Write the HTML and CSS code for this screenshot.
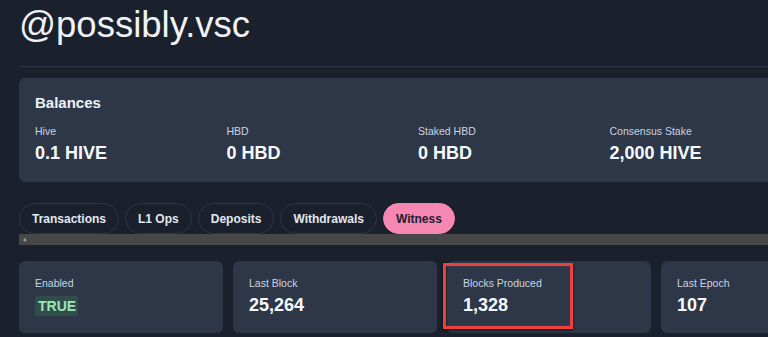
FILE: index.html
```html
<!DOCTYPE html>
<html lang="en">
<head>
    <meta charset="UTF-8">
    <meta name="viewport" content="width=device-width, initial-scale=1.0">
    <title>@possibly.vsc</title>
    <link rel="stylesheet" href="styles.css">
</head>
<body>
    <div class="page">
        <h1 class="account-name">@possibly.vsc</h1>
        <hr class="divider">

        <section class="card balances">
            <h2>Balances</h2>
            <div class="balance-grid">
                <div class="stat">
                    <div class="stat-label">Hive</div>
                    <div class="stat-value">0.1 HIVE</div>
                </div>
                <div class="stat">
                    <div class="stat-label">HBD</div>
                    <div class="stat-value">0 HBD</div>
                </div>
                <div class="stat">
                    <div class="stat-label">Staked HBD</div>
                    <div class="stat-value">0 HBD</div>
                </div>
                <div class="stat">
                    <div class="stat-label">Consensus Stake</div>
                    <div class="stat-value">2,000 HIVE</div>
                </div>
            </div>
        </section>

        <div class="tabs-wrap">
            <div class="tabs">
                <button class="tab">Transactions</button>
                <button class="tab">L1 Ops</button>
                <button class="tab">Deposits</button>
                <button class="tab">Withdrawals</button>
                <button class="tab active">Witness</button>
            </div>
            <div class="fake-scrollbar"><span class="arrow-left"></span></div>
        </div>

        <div class="witness-grid">
            <div class="card stat-card">
                <div class="stat-label">Enabled</div>
                <div class="stat-value"><span class="badge-true">TRUE</span></div>
            </div>
            <div class="card stat-card">
                <div class="stat-label">Last Block</div>
                <div class="stat-value">25,264</div>
            </div>
            <div class="card stat-card">
                <div class="stat-label">Blocks Produced</div>
                <div class="stat-value">1,328</div>
            </div>
            <div class="card stat-card">
                <div class="stat-label">Last Epoch</div>
                <div class="stat-value">107</div>
            </div>
            <!-- annotation box -->
            <div class="highlight"></div>
        </div>
    </div>
</body>
</html>
```

FILE: styles.css
```css
html, body {
    overflow: hidden;
}

body {
    margin: 0;
    padding: 0;
    background-color: #1a202c;
    color: #edf2f7;
    font-family: 'Liberation Sans', Arial, sans-serif;
}

.page {
    width: 845px;
    padding: 0 0 0 19px;
}

.account-name {
    margin: 0;
    font-size: 36.5px;
    line-height: 50px;
    font-weight: 400;
    color: #f0f2f5;
}

.divider {
    border: none;
    border-top: 1px solid #2d3748;
    margin: 16px 0 11px 0;
}

.card {
    background-color: #2d3748;
    border-radius: 6px;
}

.balances {
    padding: 16px 16px 17px 16px;
}

.balances h2 {
    margin: 0 0 13px 0;
    font-size: 15px;
    line-height: 18px;
    font-weight: 700;
    color: #edf2f7;
}

.balance-grid {
    display: grid;
    grid-template-columns: repeat(4, 191.5px);
}

.stat-label {
    font-size: 10.5px;
    line-height: 13px;
    color: #cbd5e0;
    margin-bottom: 3px;
}

.stat-value {
    font-size: 18px;
    line-height: 24px;
    font-weight: 700;
    color: #f7fafc;
}

.tabs-wrap {
    margin-top: 21px;
}

.tabs {
    display: flex;
    gap: 6px;
}

.tab {
    height: 31px;
    padding: 0 12px;
    border: 1px solid #2d3748;
    border-radius: 16px;
    background: transparent;
    color: #e2e8f0;
    font-family: inherit;
    font-size: 12px;
    font-weight: 700;
}

.tab.active {
    background-color: #f687b3;
    border-color: #f687b3;
    color: #1a202c;
}

.fake-scrollbar {
    height: 11px;
    background-color: #474747;
    display: flex;
    align-items: center;
    padding-left: 4px;
}

.arrow-left {
    width: 0;
    height: 0;
    border-top: 2.5px solid transparent;
    border-bottom: 2.5px solid transparent;
    border-right: 3px solid #a3a3a3;
}

.witness-grid {
    position: relative;
    display: grid;
    grid-template-columns: repeat(4, 204px);
    gap: 10px;
    margin-top: 16px;
}

.stat-card {
    padding: 16px;
}

.badge-true {
    display: inline-block;
    background-color: #304d4b;
    color: #9ae6b4;
    font-size: 14px;
    line-height: 20px;
    padding: 0 2px 0 3px;
    border-radius: 2px;
}

.highlight {
    position: absolute;
    left: 424px;
    top: 2px;
    width: 124px;
    height: 60px;
    border: 3px solid #ef4040;
    box-shadow: 0 1px 3px rgba(0, 0, 0, 0.6);
}
```
